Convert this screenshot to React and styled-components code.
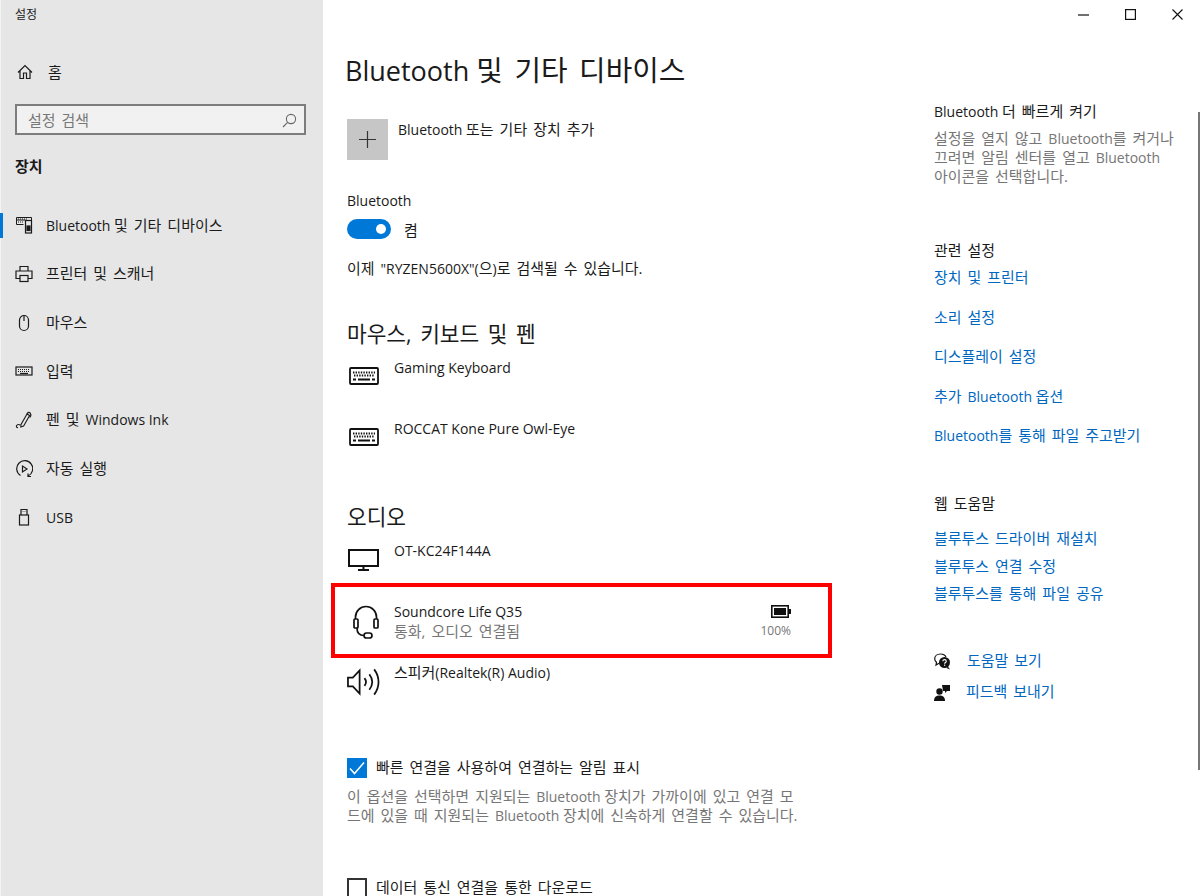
import React from 'react';
import styled, { createGlobalStyle } from 'styled-components';

const GlobalStyle = createGlobalStyle`
  html, body {
    margin: 0;
    padding: 0;
    background: #fff;
  }
  body {
    font-family: 'Open Sans', 'Noto Sans CJK KR', sans-serif;
    color: #1a1a1a;
  }
`;

const Page = styled.div`
  display: grid;
  grid-template-columns: 323px 611px 1fr;
  width: 1200px;
  height: 896px;
  overflow: hidden;
  position: relative;
`;

// Malgun runs a little bigger than Noto, so hangul gets its own size and spacing
const Ko = styled.span`
  font-size: 1.07em;
  line-height: 1;
  word-spacing: 0.14em;
`;

const T = ({ children }) =>
  children
    .split(/([\u3131-\uD7A3][\u3131-\uD7A3\s,.]*)/)
    .map((part, i) => (i % 2 ? <Ko key={i}>{part}</Ko> : part));

const Sidebar = styled.aside`
  background: #e6e6e6;
  box-shadow: inset 1px 0 0 #f4f4f4;
  display: flex;
  flex-direction: column;
`;

const AppTitle = styled.div`
  font-size: 12px;
  line-height: 16px;
  margin: 7px 0 0 15px;
`;

const HomeRow = styled.div`
  display: flex;
  align-items: center;
  height: 24px;
  margin-top: 37px;
  padding-left: 16px;
  font-size: 14px;
  gap: 14px;
`;

const SearchBox = styled.div`
  box-sizing: border-box;
  display: flex;
  align-items: center;
  justify-content: space-between;
  width: 291px;
  height: 31px;
  margin: 20px 0 0 15px;
  padding: 1px 7px 0 11px;
  background: #f1f1f1;
  border: 2px solid #7d7d7d;
  font-size: 14px;
  color: #777;
`;

const GroupTitle = styled.div`
  font-size: 14px;
  font-weight: 700;
  line-height: 20px;
  margin: 22px 0 0 15px;
`;

const NavList = styled.nav`
  display: flex;
  flex-direction: column;
  margin-top: 24px;
`;

const NavRow = styled.div`
  display: flex;
  align-items: center;
  height: 48.67px;
  padding-left: 15px;
  gap: 13px;
  font-size: 14px;
  position: relative;
  ${(p) => p.$active && `
    &::before {
      content: '';
      position: absolute;
      left: 0;
      top: 12px;
      width: 3px;
      height: 25px;
      background: #0078d7;
    }
  `}
`;

const IconSlot = styled.span`
  display: flex;
  align-items: center;
  justify-content: center;
  width: 18px;
  height: 18px;
  flex: none;
`;

const Main = styled.main`
  display: flex;
  flex-direction: column;
  padding: 51px 0 0 24px;
`;

const PageTitle = styled.h1`
  font-size: 27px;
  font-weight: 400;
  line-height: 40px;
  margin: 0 0 28px -2px;
  color: #1a1a1a;
`;

const AddRow = styled.div`
  display: flex;
  gap: 10px;
  font-size: 14px;
  line-height: 22px;
`;

const AddTile = styled.div`
  display: flex;
  align-items: center;
  justify-content: center;
  width: 41px;
  height: 41px;
  background: #c6c6c6;
`;

const Label = styled.div`
  font-size: 14px;
  line-height: 20px;
  margin-top: ${(p) => p.$top || 0}px;
`;

const ToggleRow = styled.div`
  display: flex;
  align-items: center;
  gap: 13px;
  margin-top: 8px;
  height: 20px;
  font-size: 14px;
`;

const ToggleText = styled.span`
  padding-top: 3px;
`;

const Toggle = styled.div`
  box-sizing: border-box;
  display: flex;
  align-items: center;
  justify-content: flex-end;
  width: 44px;
  height: 20px;
  padding-right: 5px;
  border-radius: 10px;
  background: #0078d7;
  &::after {
    content: '';
    width: 10px;
    height: 10px;
    border-radius: 50%;
    background: #fff;
  }
`;

const SectionTitle = styled.h2`
  font-size: 20px;
  font-weight: 400;
  line-height: 28px;
  margin: ${(p) => p.$top}px 0 0;
`;

const DeviceRow = styled.div`
  display: flex;
  align-items: flex-start;
  gap: 14px;
  height: ${(p) => p.$height}px;
  margin-top: ${(p) => p.$top || 0}px;
  font-size: 14px;
  line-height: 20px;
`;

const DeviceIcon = styled.span`
  display: flex;
  justify-content: center;
  width: 33px;
  flex: none;
  padding-top: ${(p) => p.$top || 0}px;
`;

const HighlightRow = styled.div`
  box-sizing: border-box;
  display: flex;
  align-items: center;
  width: 501px;
  height: 75px;
  margin: 0 0 0 -16px;
  padding: 3px 37px 0 18px;
  border: 4px solid #f00;
  gap: 15px;
`;

const DeviceText = styled.div`
  flex: 1;
  font-size: 14px;
  line-height: 20px;
`;

const Muted = styled.div`
  color: #767676;
`;

const BatteryBox = styled.div`
  display: flex;
  flex-direction: column;
  align-items: flex-end;
  gap: 5px;
  font-size: 12px;
  line-height: 16px;
  color: #767676;
`;

const CheckRow = styled.div`
  display: flex;
  align-items: center;
  gap: 9px;
  font-size: 14px;
  line-height: 20px;
  margin-top: ${(p) => p.$top}px;
`;

const CheckBox = styled.span`
  box-sizing: border-box;
  display: flex;
  align-items: center;
  justify-content: center;
  width: 20px;
  height: 20px;
  flex: none;
  background: ${(p) => (p.$checked ? '#0078d7' : '#fff')};
  border: 2px solid ${(p) => (p.$checked ? '#0078d7' : '#333')};
`;

const CheckHelp = styled.p`
  width: 453px;
  margin: 9px 0 0;
  font-size: 14px;
  line-height: 19px;
  color: #767676;
`;

const Aside = styled.aside`
  display: flex;
  flex-direction: column;
  padding-top: 102px;
`;

const AsideTitle = styled.div`
  font-size: 14px;
  line-height: 20px;
  margin-top: ${(p) => p.$top || 0}px;
`;

const AsideText = styled.p`
  width: 245px;
  margin: 7px 0 0;
  font-size: 14px;
  line-height: 19px;
  color: #767676;
  word-break: keep-all;
`;

const LinkList = styled.div`
  display: flex;
  flex-direction: column;
  gap: ${(p) => p.$gap}px;
  margin-top: ${(p) => p.$top}px;
`;

const AsideLink = styled.a`
  font-size: 14px;
  line-height: 20px;
  color: #0067c0;
`;

const HelpRow = styled.div`
  display: flex;
  align-items: center;
  gap: 16px;
  height: 20px;
  margin-top: ${(p) => p.$top}px;
`;

const WindowControls = styled.div`
  position: absolute;
  top: 9px;
  right: 17px;
  display: flex;
  gap: 36px;
`;

const ScrollThumb = styled.div`
  position: absolute;
  top: 112px;
  right: 0;
  width: 2px;
  height: 658px;
  background: #777;
`;

const Line = ({ size = 18, box = 18, sw = 1.2, children }) => (
  <svg width={size} height={size} viewBox={`0 0 ${box} ${box}`} fill="none" stroke="#1a1a1a" strokeWidth={sw}>
    {children}
  </svg>
);

const HomeIcon = () => (
  <Line>
    <path d="M2 9.5 9 2.5l7 7M4 8v7.5h3.5V10h3v5.5H14V8" />
  </Line>
);

const SearchIcon = () => (
  <svg width="15" height="15" viewBox="0 0 15 15" fill="none" stroke="#666" strokeWidth="1.1">
    <circle cx="9" cy="6" r="4.6" />
    <path d="M5.6 9.4 1 14" />
  </svg>
);

const DevicesIcon = () => (
  <Line>
    <path d="M10.5 4H1.5V1.5h15V4M1.5 4v4.5h7" strokeWidth="1" />
    <path d="M3 3h9M3 6h5" strokeDasharray="1 1" strokeWidth="1" />
    <rect x="10.5" y="4.5" width="6" height="12.5" />
    <rect x="12" y="10" width="3" height="4.5" fill="#1a1a1a" />
  </Line>
);

const PrinterIcon = () => (
  <Line>
    <path d="M5 6V1.5h8V6M5 13.5H1V6h16v7.5h-4" />
    <rect x="5" y="10.5" width="8" height="6" />
  </Line>
);

const MouseIcon = () => (
  <Line>
    <rect x="4.5" y="1.5" width="9" height="15" rx="4.5" />
    <path d="M9 1.5V7" />
  </Line>
);

const SmallKeyboardIcon = () => (
  <Line>
    <rect x="1" y="5" width="16" height="8" />
    <path d="M3 7.5h12M3 9.5h12" strokeDasharray="1 1" />
    <path d="M5 11.5h8" />
  </Line>
);

const PenIcon = () => (
  <Line sw={1.1}>
    <path d="M6 13.5 12 3l2.600 1.500-6 10.500-2.800 1z" />
    <path d="M12 3c1-2 2.500-2 3.300-.8s.9 2.800-.7 4.300M5.500 14c-1.800-.8-3.500-.4-4 .7s.4 2.200 1.500 1.800" />
  </Line>
);

const AutoplayIcon = () => (
  <Line>
    <path d="M5.5 15.5A8 8 0 1 1 13 16M13 13.5V16.5H16" />
    <path d="M7.5 6v6l4.5-3z" />
  </Line>
);

const UsbIcon = () => (
  <Line>
    <path d="M6 7V1.5h6V7M7.7 3.5h.6M9.7 3.5h.6" />
    <rect x="4.5" y="7" width="9" height="10" />
  </Line>
);

const PlusIcon = () => (
  <svg width="17" height="17" viewBox="0 0 17 17" stroke="#333" strokeWidth="1.2">
    <path d="M8.5 0v17M0 8.5h17" />
  </svg>
);

const KeyboardIcon = () => (
  <svg width="30" height="18" viewBox="0 0 30 18" fill="none" stroke="#111">
    <rect x="1" y="1" width="28" height="16" rx="1" strokeWidth="1.8" />
    <path d="M4 5.5h22M5 8.500h20" strokeWidth="2" strokeDasharray="1.4 1.2" />
    <path d="M4 12.500h3M9 12.500h12M23 12.500h3" strokeWidth="2" />
  </svg>
);

const MonitorIcon = () => (
  <svg width="31" height="22" viewBox="0 0 31 22" fill="none" stroke="#111" strokeWidth="2">
    <rect x="1" y="1" width="29" height="16" />
    <path d="M15.500 17v3M10 21h11" />
  </svg>
);

const HeadsetIcon = () => (
  <svg width="26" height="34" viewBox="0 0 26 34" fill="none" stroke="#111" strokeWidth="1.7">
    <path d="M2.500 14V12a10.500 10.500 0 0 1 21 0v2" />
    <rect x="1" y="14" width="4" height="9" rx="1" />
    <rect x="21" y="14" width="4" height="9" rx="1" />
    <path d="M4 23c0 5 2 7.500 7 7.500" />
    <rect x="11" y="28" width="8" height="5" rx="2.500" />
  </svg>
);

const BatteryIcon = () => (
  <svg width="20" height="13" viewBox="0 0 20 13">
    <rect x="0.800" y="0.800" width="16.400" height="11.400" fill="none" stroke="#111" strokeWidth="1.600" />
    <rect x="3" y="3" width="12" height="7" fill="#111" />
    <rect x="18" y="4" width="2" height="5" fill="#111" />
  </svg>
);

const SpeakerIcon = () => (
  <svg width="34" height="30" viewBox="0 0 34 30" fill="none" stroke="#111" strokeWidth="1.800">
    <path d="M1 10.500v9h5l7 7.500V3L6 10.500z" />
    <path d="M18 11c2 2.500 2 5.500 0 8M23 7c3.800 5 3.800 11 0 16M28 2c6 8 6 18 0 26" />
  </svg>
);

const CheckMark = () => (
  <svg width="16" height="14" viewBox="0 0 16 14" fill="none" stroke="#fff" strokeWidth="1.500">
    <path d="M1 7.500 5.500 12.500 15 1.500" />
  </svg>
);

const HelpIcon = () => (
  <svg width="17" height="17" viewBox="0 0 17 17">
    <path d="M6.500 1C3 1 .7 3.200.7 5.800c0 1.500.7 2.600 1.800 3.500L2 12l3-1.800" fill="none" stroke="#111" strokeWidth="1.200" />
    <path d="M6.500 1c2.500 0 4.500 1 5.500 3" fill="none" stroke="#111" strokeWidth="1.200" />
    <circle cx="10.500" cy="9.500" r="5.500" fill="#111" />
    <path d="M14 13.500l2 3-3.500-1.500z" fill="#111" />
    <path d="M8.800 8.300c0-2.200 3.500-2.200 3.500 0 0 1.300-1.700 1.200-1.700 2.500" fill="none" stroke="#fff" strokeWidth="1.100" />
    <rect x="10" y="11.600" width="1.200" height="1.200" fill="#fff" />
  </svg>
);

const FeedbackIcon = () => (
  <svg width="16" height="17" viewBox="0 0 16 17" fill="#111">
    <circle cx="5.500" cy="7.500" r="3.200" />
    <path d="M0 17c0-4 2.200-5.500 5.500-5.500S11 13 11 17z" />
    <path d="M8 1h8v6h-3l-2 2V7H9z" />
  </svg>
);

const MinimizeIcon = () => (
  <svg width="11" height="11" viewBox="0 0 11 11" stroke="#111" strokeWidth="1.200">
    <path d="M0 6h11" />
  </svg>
);

const MaximizeIcon = () => (
  <svg width="11" height="11" viewBox="0 0 11 11" fill="none" stroke="#111" strokeWidth="1.200">
    <rect x="0.600" y="0.600" width="9.800" height="9.800" />
  </svg>
);

const CloseIcon = () => (
  <svg width="11" height="11" viewBox="0 0 11 11" stroke="#111" strokeWidth="1.100">
    <path d="M.5.500l10 10M10.500.500l-10 10" />
  </svg>
);

const navItems = [
  { label: 'Bluetooth 및 기타 디바이스', icon: <DevicesIcon />, active: true },
  { label: '프린터 및 스캐너', icon: <PrinterIcon /> },
  { label: '마우스', icon: <MouseIcon /> },
  { label: '입력', icon: <SmallKeyboardIcon /> },
  { label: '펜 및 Windows Ink', icon: <PenIcon /> },
  { label: '자동 실행', icon: <AutoplayIcon /> },
  { label: 'USB', icon: <UsbIcon /> },
];

const relatedLinks = [
  '장치 및 프린터',
  '소리 설정',
  '디스플레이 설정',
  '추가 Bluetooth 옵션',
  'Bluetooth를 통해 파일 주고받기',
];

const webLinks = [
  '블루투스 드라이버 재설치',
  '블루투스 연결 수정',
  '블루투스를 통해 파일 공유',
];

const App = () => (
  <Page>
    <GlobalStyle />
    <Sidebar>
      <AppTitle>설정</AppTitle>
      <HomeRow>
        <IconSlot><HomeIcon /></IconSlot>
        <T>홈</T>
      </HomeRow>
      <SearchBox>
        <span><T>설정 검색</T></span>
        <SearchIcon />
      </SearchBox>
      <GroupTitle><T>장치</T></GroupTitle>
      <NavList>
        {navItems.map((item) => (
          <NavRow key={item.label} $active={item.active}>
            <IconSlot>{item.icon}</IconSlot>
            <span><T>{item.label}</T></span>
          </NavRow>
        ))}
      </NavList>
    </Sidebar>

    <Main>
      <PageTitle><T>Bluetooth 및 기타 디바이스</T></PageTitle>
      <AddRow>
        <AddTile><PlusIcon /></AddTile>
        <span><T>Bluetooth 또는 기타 장치 추가</T></span>
      </AddRow>
      <Label $top={31}>Bluetooth</Label>
      <ToggleRow>
        <Toggle />
        <ToggleText><T>켬</T></ToggleText>
      </ToggleRow>
      <Label $top={20}><T>이제 "RYZEN5600X"(으)로 검색될 수 있습니다.</T></Label>

      <SectionTitle $top={42}><T>마우스, 키보드 및 펜</T></SectionTitle>
      <DeviceRow $height={61} $top={9}>
        <DeviceIcon $top={9}><KeyboardIcon /></DeviceIcon>
        Gaming Keyboard
      </DeviceRow>
      <DeviceRow $height={60}>
        <DeviceIcon $top={9}><KeyboardIcon /></DeviceIcon>
        ROCCAT Kone Pure Owl-Eye
      </DeviceRow>

      <SectionTitle $top={25}><T>오디오</T></SectionTitle>
      <DeviceRow $height={42} $top={9}>
        <DeviceIcon $top={8}><MonitorIcon /></DeviceIcon>
        OT-KC24F144A
      </DeviceRow>
      <HighlightRow>
        <HeadsetIcon />
        <DeviceText>
          Soundcore Life Q35
          <Muted><T>통화, 오디오 연결됨</T></Muted>
        </DeviceText>
        <BatteryBox>
          <BatteryIcon />
          100%
        </BatteryBox>
      </HighlightRow>
      <DeviceRow $height={60} $top={5}>
        <DeviceIcon $top={4}><SpeakerIcon /></DeviceIcon>
        <span><T>스피커(Realtek(R) Audio)</T></span>
      </DeviceRow>

      <CheckRow $top={35}>
        <CheckBox $checked><CheckMark /></CheckBox>
        <span><T>빠른 연결을 사용하여 연결하는 알림 표시</T></span>
      </CheckRow>
      <CheckHelp>
        <T>이 옵션을 선택하면 지원되는 Bluetooth 장치가 가까이에 있고 연결 모드에 있을 때 지원되는 Bluetooth 장치에 신속하게 연결할 수 있습니다.</T>
      </CheckHelp>
      <CheckRow $top={53}>
        <CheckBox />
        <span><T>데이터 통신 연결을 통한 다운로드</T></span>
      </CheckRow>
    </Main>

    <Aside>
      <AsideTitle><T>Bluetooth 더 빠르게 켜기</T></AsideTitle>
      <AsideText>
        <T>설정을 열지 않고 Bluetooth를 켜거나 끄려면 알림 센터를 열고 Bluetooth 아이콘을 선택합니다.</T>
      </AsideText>
      <AsideTitle $top={55}><T>관련 설정</T></AsideTitle>
      <LinkList $gap={19.600} $top={7}>
        {relatedLinks.map((link) => (
          <AsideLink key={link}><T>{link}</T></AsideLink>
        ))}
      </LinkList>
      <AsideTitle $top={48}><T>웹 도움말</T></AsideTitle>
      <LinkList $gap={7.500} $top={15}>
        {webLinks.map((link) => (
          <AsideLink key={link}><T>{link}</T></AsideLink>
        ))}
      </LinkList>
      <HelpRow $top={47}>
        <HelpIcon />
        <AsideLink><T>도움말 보기</T></AsideLink>
      </HelpRow>
      <HelpRow $top={11}>
        <FeedbackIcon />
        <AsideLink><T>피드백 보내기</T></AsideLink>
      </HelpRow>
    </Aside>

    <WindowControls>
      <MinimizeIcon />
      <MaximizeIcon />
      <CloseIcon />
    </WindowControls>
    <ScrollThumb />
  </Page>
);

export default App;
